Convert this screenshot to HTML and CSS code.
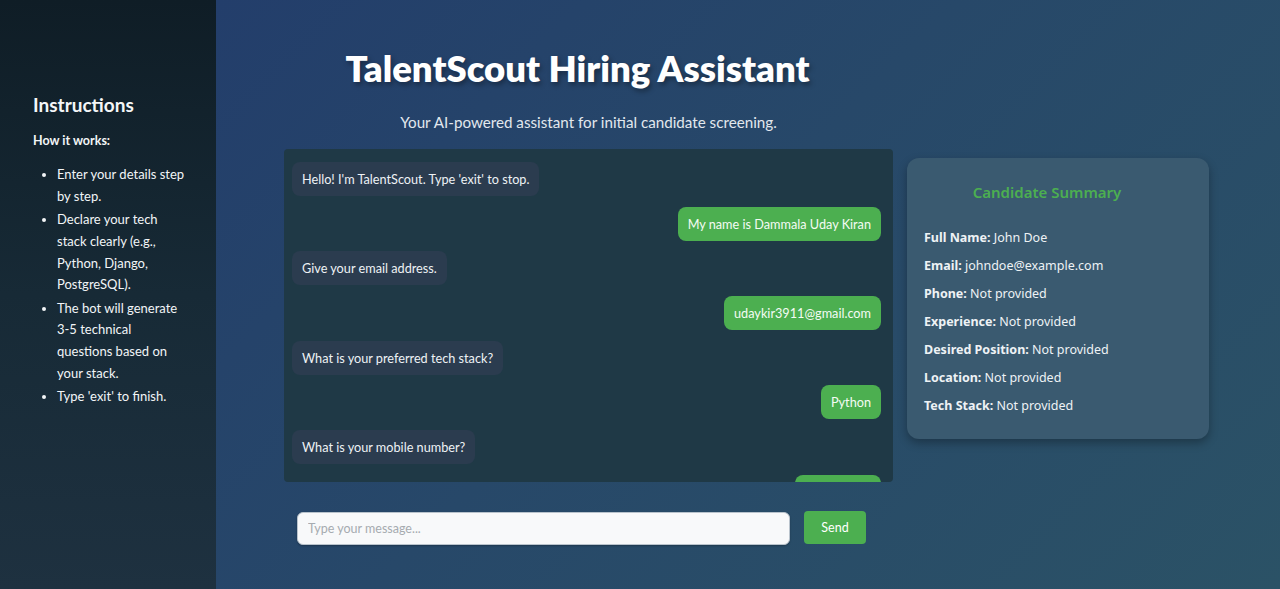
FILE: index.html
```html
<!DOCTYPE html>
<html lang="en">
<head>
<meta charset="utf-8">
<title>TalentScout Hiring Assistant</title>
<link rel="stylesheet" href="styles.css">
</head>
<body>
<aside class="sidebar">
  <h2 class="side-title">Instructions</h2>
  <p class="side-sub">How it works:</p>
  <ul class="side-list">
    <li>Enter your details step by step.</li>
    <li>Declare your tech stack clearly (e.g., Python, Django, PostgreSQL).</li>
    <li class="nobreak-hyphen">The bot will generate 3-5 technical questions based on your stack.</li>
    <li>Type 'exit' to finish.</li>
  </ul>
</aside>
<main class="main">
  <div class="cols">
    <section class="left">
      <h1 class="title">TalentScout Hiring Assistant</h1>
      <p class="subtitle">Your AI-powered assistant for initial candidate screening.</p>
      <div class="chat">
        <div class="msg bot">Hello! I'm TalentScout. Type 'exit' to stop.</div>
        <div class="msg user">My name is Dammala Uday Kiran</div>
        <div class="msg bot">Give your email address.</div>
        <div class="msg user">udaykir3911@gmail.com</div>
        <div class="msg bot">What is your preferred tech stack?</div>
        <div class="msg user">Python</div>
        <div class="msg bot">What is your mobile number?</div>
        <div class="msg user">939123456</div>
      </div>
      <form class="input-row" onsubmit="return false">
        <input class="msg-input" type="text" placeholder="Type your message...">
        <button class="send" type="button">Send</button>
      </form>
    </section>
    <section class="right">
      <div class="card">
        <h3 class="card-title">Candidate Summary</h3>
        <p class="row"><b>Full Name:</b> John Doe</p>
        <p class="row"><b>Email:</b> johndoe@example.com</p>
        <p class="row"><b>Phone:</b> Not provided</p>
        <p class="row"><b>Experience:</b> Not provided</p>
        <p class="row"><b>Desired Position:</b> Not provided</p>
        <p class="row"><b>Location:</b> Not provided</p>
        <p class="row"><b>Tech Stack:</b> Not provided</p>
      </div>
    </section>
  </div>
</main>
</body>
</html>
```

FILE: styles.css
```css
* { box-sizing: border-box; }
html, body { margin: 0; height: 100%; }
body {
  display: flex;
  height: 589px;
  overflow: hidden;
  font-family: "Lato", "Open Sans", sans-serif;
  color: #f2f5f7;
}
.sidebar {
  width: 216px;
  flex: none;
  background: linear-gradient(180deg, #0f1d26 0%, #172a36 50%, #1e3140 100%);
  padding: 94px 29px 0 33px;
}
.side-title {
  margin: 0;
  font-size: 19px;
  font-weight: 700;
  color: #f4f6f8;
  line-height: 22px;
}
.side-sub {
  margin: 17px 0 0;
  font-size: 12.5px;
  font-weight: 700;
  line-height: 16px;
}
.side-list {
  margin: 15px 0 0;
  padding-left: 24px;
  font-size: 13px;
  line-height: 21.7px;
}
.side-list li { margin-bottom: 1.7px; }
.nobreak-hyphen { width: 122px; }
.main {
  flex: 1;
  background: linear-gradient(135deg, #233e6b 0%, #274869 45%, #2b5266 100%);
  padding: 0 71px 0 68px;
}
.cols {
  display: grid;
  grid-template-columns: 609px 302px;
  column-gap: 14px;
}
.left { display: flex; flex-direction: column; }
.title {
  margin: 46px 0 0;
  padding-right: 22px;
  text-align: center;
  font-size: 36.5px;
  line-height: 44px;
  font-weight: 800;
  color: #fff;
  text-shadow: 2px 3px 5px rgba(0,0,0,0.35);
}
.subtitle {
  margin: 22px 0 0;
  text-align: center;
  font-size: 15.2px;
  line-height: 20px;
  color: #e2e8ee;
}
.chat {
  margin-top: 17px;
  height: 333px;
  overflow: hidden;
  background: #1f3946;
  border-radius: 4px;
  padding: 13px 12px 0 8px;
  display: flex;
  flex-direction: column;
  gap: 10.7px;
}
.msg {
  flex: none;
  padding: 8px 10px;
  font-size: 12.7px;
  line-height: 18px;
  border-radius: 8px;
  max-width: 75%;
}
.bot { align-self: flex-start; background: #2b3c4f; color: #eef2f5; }
.user { align-self: flex-end; background: #4caf50; color: #f4fbf4; }
.input-row {
  display: flex;
  align-items: center;
  gap: 14px;
  margin: 30px 0 0 13px;
}
.msg-input {
  width: 493px;
  height: 33px;
  border: 1px solid #b9c3cc;
  border-radius: 6px;
  background: #f8f9fa;
  padding: 0 10px;
  font-family: inherit;
  font-size: 12.5px;
  color: #333;
  box-shadow: 0 1px 2px rgba(0,0,0,0.25);
}
.msg-input::placeholder { color: #a6abb0; }
.send {
  width: 62px;
  height: 33px;
  margin-top: -3px;
  border: 0;
  border-radius: 4px;
  background: #4caf50;
  color: #fff;
  font-family: inherit;
  font-size: 12.5px;
}
.right { padding-top: 158px; }
.card {
  background: #3a5a70;
  border-radius: 12px;
  padding: 24px 17px 19px;
  box-shadow: 0 4px 10px rgba(0,0,0,0.3);
  font-family: "Noto Sans", "Open Sans", sans-serif;
}
.card-title {
  margin: 0 0 22px;
  text-align: center;
  padding-right: 22px;
  font-size: 15px;
  line-height: 20px;
  font-weight: 600;
  color: #4caf50;
}
.row {
  margin: 0;
  font-size: 12.5px;
  line-height: 28px;
  color: #eef2f5;
}
.row b { font-weight: 700; }
```
